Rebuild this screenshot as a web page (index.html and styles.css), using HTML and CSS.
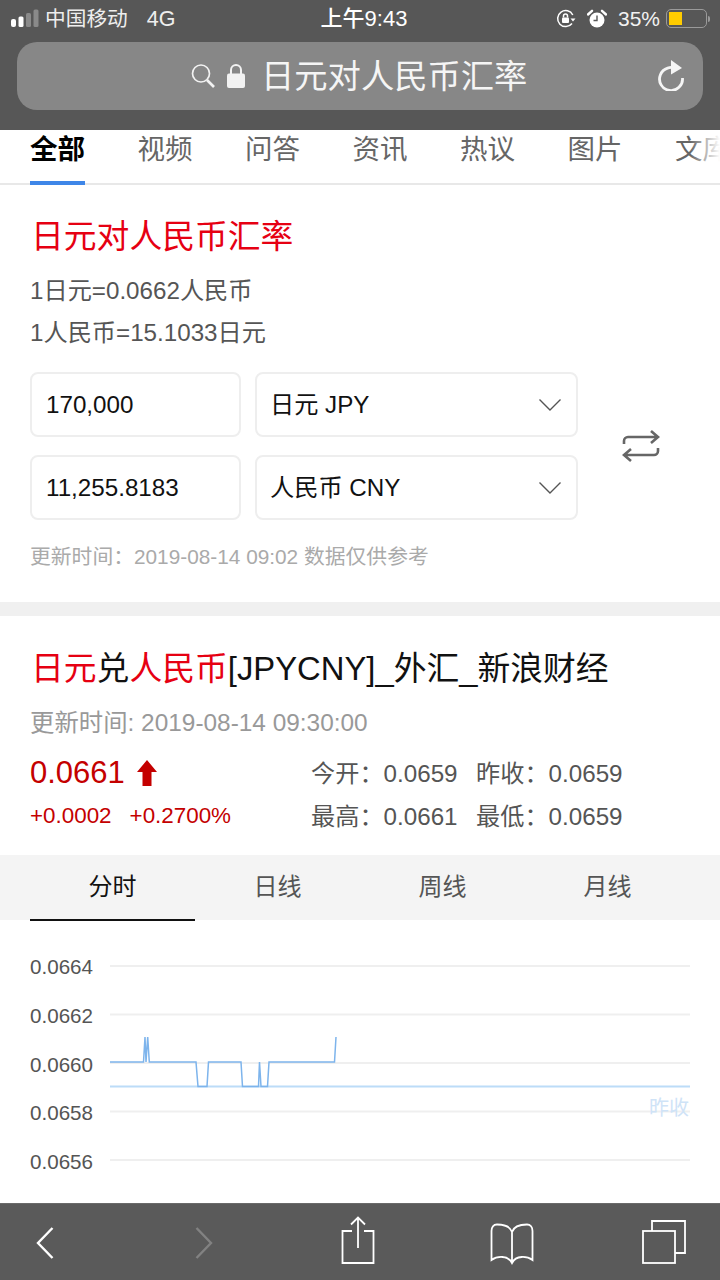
FILE: index.html
```html
<!DOCTYPE html>
<html lang="zh-CN">
<head>
    <meta charset="UTF-8">
    <meta name="viewport" content="width=device-width, initial-scale=1.0">
    <title>日元对人民币汇率</title>
    <link rel="stylesheet" href="styles.css">
</head>
<body>
    <header class="safari-top">
        <div class="status-bar">
            <div class="status-left">
                <svg class="signal" width="30" height="20" viewBox="0 0 30 20">
                    <rect x="1" y="10" width="5" height="8" rx="2" fill="#fff"/>
                    <rect x="8.500" y="7.500" width="5" height="10.500" rx="1.500" fill="#fff"/>
                    <rect x="16" y="4" width="5" height="14" rx="1.500" fill="#8a8a8a"/>
                    <rect x="23.500" y="0.500" width="5" height="17.500" rx="1.500" fill="#8a8a8a"/>
                </svg>
                <span class="carrier">中国移动</span>
                <span class="network">4G</span>
            </div>
            <div class="status-time">上午9:43</div>
            <div class="status-right">
                <svg class="orientation" width="20" height="20" viewBox="0 0 20 20" fill="none" stroke="#fff" stroke-width="1.500">
                    <path d="M16 14.500A8 8 0 1 1 16.800 6"/>
                    <path d="M14.500 9.500h5l-2.500 3z" fill="#fff" stroke="none"/>
                    <rect x="6" y="8.500" width="7" height="5.500" rx="1" fill="#fff" stroke="none"/>
                    <path d="M7.500 8.500V7a2 2 0 0 1 4 0v1.500"/>
                </svg>
                <svg class="alarm" width="20" height="20" viewBox="0 0 20 20">
                    <circle cx="10" cy="11" r="7.500" fill="#fff"/>
                    <path d="M1 5.500 5 1.800M19 5.500 15 1.800" stroke="#fff" stroke-width="2.400" stroke-linecap="round"/>
                    <path d="M10 6.500V11.500H6.500" fill="none" stroke="#575757" stroke-width="1.400"/>
                </svg>
                <span class="battery-text">35%</span>
                <div class="battery"><div class="battery-level"></div></div>
                <div class="battery-nub"></div>
            </div>
        </div>
        <div class="url-bar">
            <div class="url-center">
                <svg width="26" height="26" viewBox="0 0 26 26" fill="none" stroke="#f2f2f2">
                    <circle cx="11" cy="10.500" r="8.500" stroke-width="1.700"/>
                    <path d="M17 17l7 7" stroke-width="2.600"/>
                </svg>
                <svg class="url-lock" width="20" height="26" viewBox="0 0 20 26" fill="none">
                    <path d="M5 12V7a5 5 0 0 1 10 0v5" stroke="#f2f2f2" stroke-width="2"/>
                    <rect x="1" y="10.500" width="18" height="14.500" rx="2" fill="#f2f2f2"/>
                </svg>
                <span class="url-text">日元对人民币汇率</span>
            </div>
            <svg class="reload" width="28" height="32" viewBox="0 0 28 32" fill="none">
                <path d="M20.500 10.500A11.500 11.500 0 1 0 25.500 19" stroke="#f5f5f5" stroke-width="2.800"/>
                <path d="M14 1l11 8-11 6.500z" fill="#f5f5f5"/>
            </svg>
        </div>
    </header>

    <main class="page">
        <nav class="search-tabs">
            <span class="search-tab active">全部</span>
            <span class="search-tab">视频</span>
            <span class="search-tab">问答</span>
            <span class="search-tab">资讯</span>
            <span class="search-tab">热议</span>
            <span class="search-tab">图片</span>
            <span class="search-tab">文库</span>
            <div class="tabs-fade"></div>
        </nav>

        <section class="converter">
            <h2 class="converter-title">日元对人民币汇率</h2>
            <p class="rate-line">1日元=0.0662人民币</p>
            <p class="rate-line">1人民币=15.1033日元</p>
            <div class="converter-form">
                <div class="converter-grid">
                    <div class="field">170,000</div>
                    <div class="field field-select">
                        <span class="jpy">日元 JPY</span>
                        <svg width="24" height="14" viewBox="0 0 24 14" fill="none" stroke="#555" stroke-width="1.400"><path d="M1.500 1.500 12 12 22.500 1.500"/></svg>
                    </div>
                    <div class="field">11,255.8183</div>
                    <div class="field field-select">
                        <span>人民币 CNY</span>
                        <svg width="24" height="14" viewBox="0 0 24 14" fill="none" stroke="#555" stroke-width="1.400"><path d="M1.500 1.500 12 12 22.500 1.500"/></svg>
                    </div>
                </div>
                <svg class="swap" width="38" height="32" viewBox="0 0 38 32" fill="none" stroke="#666" stroke-width="2.600">
                    <path d="M2 14V11a4 4 0 0 1 4-4h30M29 1l7 6-7 6"/>
                    <path d="M36 18v3a4 4 0 0 1-4 4H2M9 19l-7 6 7 6"/>
                </svg>
            </div>
            <p class="update-note">更新时间：2019-08-14 09:02 数据仅供参考</p>
        </section>

        <section class="result">
            <h2 class="result-title"><em>日元</em>兑<em>人民币</em>[JPYCNY]_外汇_新浪财经</h2>
            <p class="result-time">更新时间: 2019-08-14 09:30:00</p>
            <div class="quote">
                <div class="quote-main">
                    <div class="price">0.0661
                        <svg width="20" height="26" viewBox="0 0 20 26"><path d="M10 0 20 12H14.500V26H5.500V12H0z" fill="#c40000"/></svg>
                    </div>
                    <div class="change"><span>+0.0002</span><span>+0.2700%</span></div>
                </div>
                <div class="quote-stats">
                    <span>今开：0.0659</span><span>昨收：0.0659</span>
                    <span>最高：0.0661</span><span>最低：0.0659</span>
                </div>
            </div>
        </section>

        <div class="chart-tabs">
            <span class="chart-tab active">分时</span>
            <span class="chart-tab">日线</span>
            <span class="chart-tab">周线</span>
            <span class="chart-tab">月线</span>
        </div>

        <div class="chart">
            <svg width="720" height="320" viewBox="0 920 720 320">
                <g class="grid">
                    <path d="M110 966H690M110 1014.500H690M110 1063H690M110 1111.500H690M110 1160H690M110 1208.500H690"/>
                </g>
                <g class="axis">
                    <text x="30" y="974">0.0664</text>
                    <text x="30" y="1023">0.0662</text>
                    <text x="30" y="1072">0.0660</text>
                    <text x="30" y="1120">0.0658</text>
                    <text x="30" y="1169">0.0656</text>
                    <text x="30" y="1217">0.0654</text>
                </g>
                <path class="base-line" d="M110 1086.500H690"/>
                <polyline class="price-line" points="110,1062 143.500,1062 145,1037 146,1062 147.700,1037 149.300,1062 196,1062 198,1086.500 207,1086.500 208.500,1062 241,1062 242.500,1086.500 258.500,1086.500 259.500,1062 261,1086.500 267.500,1086.500 269,1062 334.500,1062 336,1037"/>
                <text class="base-label" x="649" y="1115">昨收</text>
            </svg>
        </div>
    </main>

    <footer class="safari-bottom">
        <svg class="tool-back" width="18" height="32" viewBox="0 0 18 32" fill="none" stroke="#fff" stroke-width="2.400"><path d="M16.500 1 2 16l14.500 15"/></svg>
        <svg class="tool-forward" width="18" height="32" viewBox="0 0 18 32" fill="none" stroke="#828282" stroke-width="2.400"><path d="M1.500 1 16 16 1.500 31"/></svg>
        <svg class="tool-share" width="34" height="48" viewBox="0 0 34 48" fill="none" stroke="#fff" stroke-width="1.800">
            <path d="M11 15H1.500V47H32.500V15H23"/>
            <path d="M17 32V1.500M10 8.500l7-7 7 7"/>
        </svg>
        <svg class="tool-book" width="44" height="42" viewBox="0 0 44 42" fill="none" stroke="#fff" stroke-width="1.800">
            <path d="M22 9C20 3 14 1.500 7 1.500 3.500 1.500 1.500 4 1.500 8V37C7 33 18 32 22 40 26 32 37 33 42.500 37V8C42.500 4 40.500 1.500 37 1.500 30 1.500 24 3 22 9V38"/>
        </svg>
        <svg class="tool-tabs" width="44" height="44" viewBox="0 0 44 44" fill="none" stroke="#fff" stroke-width="1.800">
            <path d="M10 11V1H43V33H33"/>
            <rect x="1" y="11" width="32" height="32"/>
        </svg>
    </footer>
</body>
</html>
```
FILE: styles.css
```css
* {
    box-sizing: border-box;
}
html, body {
    margin: 0;
    padding: 0;
}
body {
    width: 720px;
    height: 1280px;
    overflow: hidden;
    display: flex;
    flex-direction: column;
    background-color: white;
    font-family: "Liberation Sans", "Noto Sans CJK SC", sans-serif;
    color: #555;
}
p, h2 {
    margin: 0;
    font-weight: normal;
}
em {
    font-style: normal;
    color: #e60012;
}

/* browser chrome, top */
.safari-top {
    height: 130px;
    flex: none;
    padding: 0 17px;
    background-color: #575757;
    color: white;
}
.status-bar {
    height: 42px;
    margin: 0 -7px;
    padding-bottom: 5px;
    display: grid;
    grid-template-columns: 1fr auto 1fr;
    align-items: center;
    font-size: 20.700px;
    line-height: 24px;
}
.status-left {
    display: flex;
    align-items: center;
    color: #eee;
}
.signal {
    margin-right: 5px;
}
.network {
    margin-left: 19px;
    font-size: 21.500px;
}
.status-time {
    font-size: 22px;
    font-weight: 500;
    transform: translateX(4px);
}
.status-right {
    display: flex;
    align-items: center;
    justify-content: flex-end;
}
.alarm {
    margin-left: 11px;
}
.battery-text {
    margin-left: 11px;
    font-size: 21px;
    color: #f2f2f2;
}
.battery {
    width: 41px;
    height: 19px;
    margin-left: 6px;
    padding: 2px;
    border: 1.500px solid #9a9a9a;
    border-radius: 5px;
}
.battery-level {
    width: 13px;
    height: 100%;
    background-color: #ffcc00;
}
.battery-nub {
    width: 2px;
    height: 6px;
    margin-left: 1px;
    background-color: #9a9a9a;
    border-radius: 0 2px 2px 0;
}
.url-bar {
    height: 68px;
    padding: 0 18px 0 173px;
    display: flex;
    align-items: center;
    justify-content: space-between;
    background-color: #878787;
    border-radius: 20px;
}
.url-center {
    display: flex;
    align-items: center;
}
.url-lock {
    margin-left: 10px;
}
.url-text {
    margin-left: 15px;
    font-size: 33.300px;
    line-height: 40px;
    color: #f5f5f5;
    transform: translateY(1px);
}
.reload {
    margin-top: -2px;
}

/* main page */
.page {
    flex: 1;
    min-height: 0;
    overflow: hidden;
}
.search-tabs {
    height: 55px;
    padding-left: 30px;
    display: flex;
    gap: 52.500px;
    position: relative;
    overflow: hidden;
    box-shadow: inset 0 -2px 0 #e8e8e8;
}
.search-tab {
    flex: none;
    height: 55px;
    font-size: 27.500px;
    line-height: 40px;
    color: #666;
}
.search-tab.active {
    color: black;
    font-weight: bold;
    border-bottom: 4px solid #3e86e8;
}
.tabs-fade {
    position: absolute;
    top: 0;
    right: 0;
    width: 30px;
    height: 50px;
    background: linear-gradient(to right, rgba(255, 255, 255, 0), white);
}

.converter {
    height: 431px;
    padding: 30px 30px 0;
    border-bottom: 14px solid #f0f0f0;
}
.converter-title {
    margin: 0 0 11px 1px;
    font-size: 32.800px;
    line-height: 44px;
    color: #e60012;
}
.rate-line {
    font-size: 24.200px;
    line-height: 42px;
    color: #555;
}
.converter-form {
    margin-top: 18px;
    display: flex;
    align-items: center;
}
.converter-grid {
    display: grid;
    grid-template-columns: 211px 323px;
    grid-auto-rows: 65px;
    gap: 18px 14px;
}
.field {
    padding-left: 14px;
    display: flex;
    align-items: center;
    font-size: 24.200px;
    line-height: 30px;
    color: #111;
    border: 2px solid #eee;
    border-radius: 8px;
}
.field-select {
    justify-content: space-between;
    padding-left: 13px;
    padding-right: 14px;
}
.jpy {
    margin-left: 0;
}
.swap {
    margin-left: 44px;
}
.update-note {
    margin-top: 22px;
    font-size: 20.800px;
    line-height: 30px;
    color: #aaa;
}

.result {
    height: 239px;
    padding: 31px 30px 0;
}
.result-title {
    margin-left: 1px;
    font-size: 32.800px;
    line-height: 44px;
    color: #111;
}
.result-time {
    margin-top: 17px;
    font-size: 24.400px;
    line-height: 30px;
    color: #999;
}
.quote {
    margin-top: 13px;
    display: flex;
}
.quote-main {
    width: 281px;
    color: #c40000;
}
.price {
    display: flex;
    align-items: center;
    gap: 12px;
    font-size: 31px;
    line-height: 44px;
}
.change {
    margin-top: 6px;
    display: flex;
    gap: 18px;
    font-size: 22.400px;
    line-height: 30px;
}
.quote-stats {
    margin-top: -1px;
    display: grid;
    grid-template-columns: 165px auto;
    grid-auto-rows: 43px;
    font-size: 24.200px;
    align-items: center;
    color: #555;
}

.chart-tabs {
    height: 65px;
    display: grid;
    grid-template-columns: 30px repeat(4, 165px);
    background-color: #f4f4f4;
}
.chart-tab {
    font-size: 24px;
    line-height: 64px;
    text-align: center;
    color: #555;
}
.chart-tab.active {
    grid-column: 2;
    color: #111;
    border-bottom: 2px solid #111;
}
.chart svg {
    display: block;
}
.grid path {
    fill: none;
    stroke: #efefef;
    stroke-width: 2;
}
.axis text {
    font-size: 20.600px;
    fill: #555;
}
.base-line {
    fill: none;
    stroke: #bcdcf8;
    stroke-width: 2;
}
.price-line {
    fill: none;
    stroke: #7db4ec;
    stroke-width: 1.500;
}
.base-label {
    font-size: 20px;
    fill: #cfe3f7;
}

/* browser chrome, bottom */
.safari-bottom {
    height: 77px;
    flex: none;
    position: relative;
    background-color: #5a5a5a;
    border-top: 1px solid #6a6a6a;
}
.safari-bottom svg {
    position: absolute;
}
.tool-back {
    left: 36px;
    top: 23px;
}
.tool-forward {
    left: 195px;
    top: 23px;
}
.tool-share {
    left: 341px;
    top: 12px;
}
.tool-book {
    left: 490px;
    top: 19px;
}
.tool-tabs {
    left: 642px;
    top: 16px;
}
```
